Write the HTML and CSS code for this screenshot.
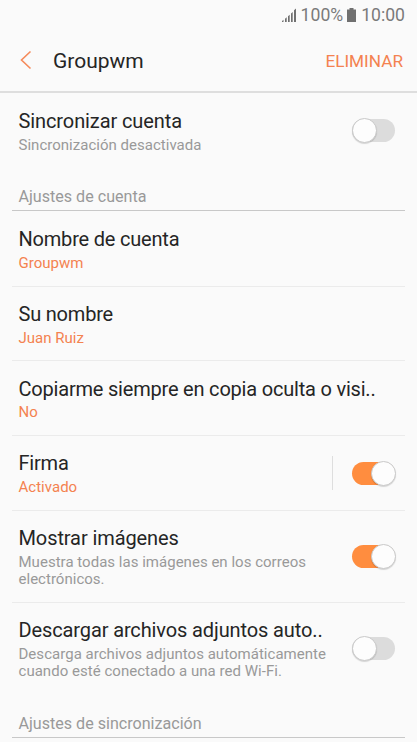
FILE: index.html
```html
<!DOCTYPE html>
<html lang="es">
<head>
<meta charset="utf-8">
<title>Groupwm</title>
<link rel="stylesheet" href="styles.css">
</head>
<body>
<div class="screen">
  <div class="status">
    <svg class="signal" width="14" height="14" viewBox="0 0 14 14"><path d="M0 14v-1l1.500-1.200v2.200zM3 14v-3.300l1.700-1.500v4.800zM6 14v-5.700l1.700-1.600v7.300zM9 14v-8.500l1.700-1.600v10.100zM12 14v-11.700l2-1.800v13.500z"/></svg>
    <span class="percent">100%</span>
    <svg class="battery" width="9" height="14" viewBox="0 0 9 14"><path d="M2.500 0h4v1.500h2.500v12.500h-9v-12.500h2.500z"/></svg>
    <span class="clock">10:00</span>
  </div>
  <header class="header">
    <svg class="back" width="12" height="20" viewBox="0 0 12 20"><path d="M10.500 1.500L1.500 10l9 8.500"/></svg>
    <h1 class="heading">Groupwm</h1>
    <span class="action">ELIMINAR</span>
  </header>
  <main>
    <div class="row plain">
      <div class="text lead"><div class="title sync">Sincronizar cuenta</div><div class="sub">Sincronización desactivada</div></div>
      <span class="switch"></span>
    </div>
    <h2 class="section"><span>Ajustes de cuenta</span></h2>
    <div class="row tall">
      <div class="text lead"><div class="title">Nombre de cuenta</div><div class="sub value">Groupwm</div></div>
    </div>
    <div class="row short">
      <div class="text"><div class="title">Su nombre</div><div class="sub value">Juan Ruiz</div></div>
    </div>
    <div class="row">
      <div class="text lead"><div class="title">Copiarme siempre en copia oculta o visi..</div><div class="sub value near">No</div></div>
    </div>
    <div class="row">
      <div class="text"><div class="title">Firma</div><div class="sub value">Activado</div></div>
      <span class="divider"></span>
      <span class="switch on"></span>
    </div>
    <div class="row double">
      <div class="text"><div class="title sync">Mostrar imágenes</div><div class="sub">Muestra todas las imágenes en los correos<br>electrónicos.</div></div>
      <span class="switch on"></span>
    </div>
    <div class="row double plain">
      <div class="text"><div class="title wide">Descargar archivos adjuntos auto..</div><div class="sub wide-sub">Descarga archivos adjuntos automáticamente<br>cuando esté conectado a una red Wi-Fi.</div></div>
      <span class="switch"></span>
    </div>
    <h2 class="section"><span>Ajustes de sincronización</span></h2>
  </main>
</div>
</body>
</html>
```
FILE: styles.css
```css
*, *::after { box-sizing: border-box; }
body { margin: 0; background: #fafafa; font-family: Roboto, "Liberation Sans", sans-serif; }
.screen { width: 417px; height: 742px; overflow: hidden; background: #fafafa; }
.status { display: flex; align-items: center; justify-content: flex-end; height: 30px; padding-right: 12px; color: #7a7a7a; font-size: 17.6px; line-height: 20px; }
.status svg { fill: #707070; }
.percent { margin: 0 4px 0 5px; }
.clock { margin-left: 5px; }
.header { display: flex; align-items: center; height: 63px; padding: 0 14px 0 20px; border-bottom: 2px solid #dedede; }
.back { margin-bottom: 2px; fill: none; stroke: #f58a5a; stroke-width: 1.6; }
.heading { flex: 1; margin: 0 0 0 21px; color: #252525; font-size: 21px; font-weight: 400; line-height: 24px; }
.action { color: #f48250; font-size: 17.2px; line-height: 20px; }
.row { display: flex; align-items: center; height: 75px; margin: 0 12px; padding: 0 10px 0 6.5px; border-bottom: 1px solid #ebebeb; }
.tall { height: 76px; }
.short { height: 74px; }
.double { height: 92px; }
.plain { border-bottom-color: transparent; }
.text { flex: 1; align-self: flex-start; padding-top: 15px; white-space: nowrap; }
.title { color: #252525; font-size: 20px; line-height: 24px; letter-spacing: -.2px; }
.sub { margin-top: 4px; color: #999; font-size: 15px; line-height: 17px; letter-spacing: .02px; }
.near { margin-top: 3px; }
.lead { padding-top: 16px; }
.sync { letter-spacing: -.1px; }
.wide { letter-spacing: -.12px; }
.wide-sub { letter-spacing: .03px; }
.value { color: #f48250; }
.section { display: flex; align-items: flex-end; height: 43px; margin: 0 12px; padding: 0 6.5px 3px; border-bottom: 1px solid #c8c8c8; color: #999; font-size: 16.1px; font-weight: 400; line-height: 20px; }
.divider { width: 1px; height: 34px; margin-right: 19px; background: #dedede; }
.switch { position: relative; width: 43px; height: 23px; border-radius: 12px; background: #dcdcdc; }
.switch::after { content: ""; position: absolute; left: 0; top: -1px; width: 25px; height: 25px; border: 1px solid #c9c9c9; border-radius: 50%; background: #fdfdfd; box-shadow: 0 1px 1px rgba(0, 0, 0, .15); }
.on { background: #ff8d3f; }
.on::after { left: 19px; }
```
